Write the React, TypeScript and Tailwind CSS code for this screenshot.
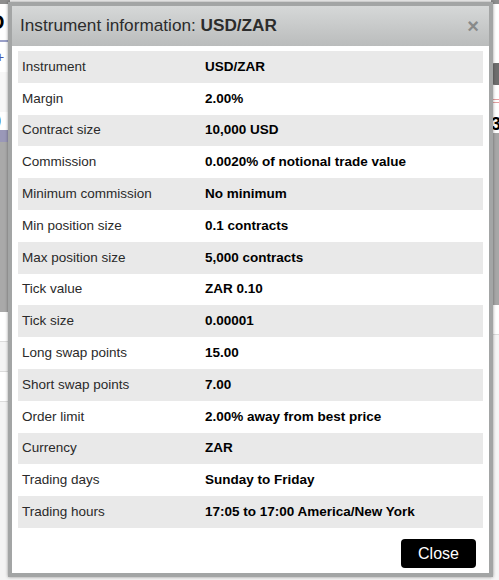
import React from "react";

const rows: [string, string][] = [
  ["Instrument", "USD/ZAR"],
  ["Margin", "2.00%"],
  ["Contract size", "10,000 USD"],
  ["Commission", "0.0020% of notional trade value"],
  ["Minimum commission", "No minimum"],
  ["Min position size", "0.1 contracts"],
  ["Max position size", "5,000 contracts"],
  ["Tick value", "ZAR 0.10"],
  ["Tick size", "0.00001"],
  ["Long swap points", "15.00"],
  ["Short swap points", "7.00"],
  ["Order limit", "2.00% away from best price"],
  ["Currency", "ZAR"],
  ["Trading days", "Sunday to Friday"],
  ["Trading hours", "17:05 to 17:00 America/New York"],
];

export default function App() {
  return (
    <div className="relative w-[499px] h-[580px] overflow-hidden bg-[#f2f2f2] font-['Liberation_Sans',Arial,sans-serif]">
      {/* page behind the dialog */}
      <div className="flex h-full">
        <div className="w-[10px] flex flex-col">
          <div className="h-[4px] bg-[#8e8e8e]" />
          <div className="h-[36px] bg-white text-[20px] font-bold leading-[36px] -ml-[10px] text-black">D</div>
          <div className="h-[2px] bg-[#9aa0c8]" />
          <div className="h-[30px] bg-white text-[14px] leading-[30px] text-[#4455aa] -ml-[4px]">+</div>
          <div className="h-[40px] bg-[#f7f7f7]" />
          <div className="h-[18px] bg-white text-[20px] font-bold leading-[18px] -ml-[10px]">0</div>
          <div className="h-[12px] bg-[#9a98b8]" />
          <div className="h-[170px] bg-[#a9a9a9]" />
          <div className="h-[30px] bg-white border-b border-[#dcdcdc]" />
          <div className="h-[30px] bg-[#f4f4f4] border-b border-[#dcdcdc]" />
          <div className="h-[30px] bg-white border-b border-[#dcdcdc]" />
          <div className="flex-1 bg-[#f4f4f4]" />
        </div>
        <div className="flex-1" />
        <div className="w-[8px] flex flex-col">
          <div className="h-[4px] bg-[#8e8e8e]" />
          <div className="h-[59px] bg-white" />
          <div className="h-[22px] bg-[#6e6e6e] rounded-l-[4px]" />
          <div className="h-[14px] bg-white" />
          <div className="h-[4px] bg-white border-y border-[#e3a0a0]" />
          <div className="h-[12px] bg-white" />
          <div className="h-[18px] bg-white text-[18px] font-bold leading-[18px] text-black">3</div>
          <div className="h-[172px] bg-[#a7a7a7]" />
          <div className="h-[30px] bg-white border-b border-[#dcdcdc]" />
          <div className="flex-1 bg-[#f6f6f6]" />
        </div>
      </div>

      {/* dialog */}
      <div className="absolute left-[8px] top-[2px] w-[485px] h-[575px] border-4 border-[#a3a5a5] bg-white flex flex-col shadow-[0_0_3px_rgba(0,0,0,0.4)]">
        <div className="h-[40px] flex items-center justify-between px-[8px] bg-gradient-to-b from-[#d6d8d8] to-[#babcbc]">
          <div className="text-[17.2px] text-[#2c2c2c]">
            Instrument information: <span className="font-bold">USD/ZAR</span>
          </div>
          <span className="text-[20px] font-bold text-[#888a8a] leading-none mr-[2px]">×</span>
        </div>
        <div className="flex-1 flex flex-col px-[6px] pt-[5px] pb-[5px]">
          <div className="flex flex-col">
            {rows.map(([k, v], i) => (
              <div
                key={k}
                className={`h-[31.8px] flex items-center text-[13.5px] ${i % 2 === 0 ? "bg-[#e9e9e9]" : "bg-white"}`}
              >
                <div className="w-[187px] pl-[4px] text-[#2a2a2a]">{k}</div>
                <div className="font-bold text-black">{v}</div>
              </div>
            ))}
          </div>
          <div className="flex-1" />
          <div className="flex justify-end pr-[7px]">
            <button className="w-[75px] h-[29px] bg-black text-white text-[16px] rounded-[4px]">Close</button>
          </div>
        </div>
      </div>
    </div>
  );
}
